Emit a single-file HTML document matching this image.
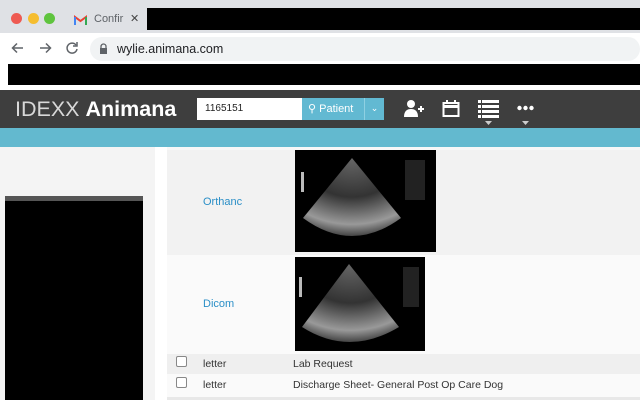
<!DOCTYPE html>
<html><head><style>
*{margin:0;padding:0;box-sizing:border-box}
body{width:640px;height:400px;overflow:hidden;background:#fff;font-family:"Liberation Sans",Arial,sans-serif;position:relative}
.a{position:absolute}
</style></head><body>
<div class="a" style="left:0;top:0;width:640px;height:33px;background:#dfe1e5"></div>
<div class="a" style="left:11px;top:13px;width:11px;height:11px;border-radius:50%;background:#ee5a52"></div>
<div class="a" style="left:28px;top:13px;width:11px;height:11px;border-radius:50%;background:#f5bd2f"></div>
<div class="a" style="left:44px;top:13px;width:11px;height:11px;border-radius:50%;background:#5fc43e"></div>
<svg class="a" style="left:74px;top:15px" width="13" height="10" viewBox="0 0 13 10"><path d="M1 10V2l5.5 4L12 2v8" fill="none" stroke="#ea4335" stroke-width="2"/><path d="M1 10V2" stroke="#4285f4" stroke-width="2"/><path d="M12 10V2" stroke="#34a853" stroke-width="2"/></svg>
<div class="a" style="left:94px;top:13px;font-size:11px;color:#5f6368">Confir</div>
<div class="a" style="left:130px;top:12px;font-size:11px;color:#444">✕</div>
<div class="a" style="left:147px;top:8px;width:493px;height:22px;background:#000"></div>
<div class="a" style="left:0;top:33px;width:640px;height:31px;background:#fff"></div>
<svg class="a" style="left:10px;top:40px" width="70" height="16" viewBox="0 0 70 16" fill="none" stroke="#5f6368" stroke-width="1.5"><path d="M13 8H3M7 3.5L2.5 8 7 12.5"/><path d="M30 8h10M36 3.5L40.5 8 36 12.5"/><path d="M66 5a5 5 0 1 0 1 4"/><path d="M67 2v4h-4"/></svg>
<div class="a" style="left:90px;top:37px;width:550px;height:24px;border-radius:12px;background:#f1f3f4"></div>
<svg class="a" style="left:99px;top:43px" width="9" height="11" viewBox="0 0 9 11"><path d="M2 5V3.5a2.5 2.5 0 0 1 5 0V5" fill="none" stroke="#5f6368" stroke-width="1.3"/><rect x="1" y="5" width="7" height="6" fill="#5f6368"/></svg>
<div class="a" style="left:117px;top:42px;font-size:12.5px;color:#202124">wylie.animana.com</div>
<div class="a" style="left:8px;top:64px;width:632px;height:21px;background:#000"></div>
<div class="a" style="left:0;top:90px;width:640px;height:38px;background:#3e3e3e"></div>
<div class="a" style="left:15px;top:96px;font-size:21.5px;color:#fff;line-height:26px;white-space:nowrap"><span style="color:#d8d8d8">IDEXX</span> <b>Animana</b></div>
<div class="a" style="left:197px;top:98px;width:105px;height:22px;background:#fff;font-size:10px;padding:5px 0 0 8px;color:#222">1165151</div>
<div class="a" style="left:302px;top:98px;width:62px;height:22px;background:#62b9d2;color:#fff;font-size:11px;padding:4px 0 0 6px">⚲ Patient</div>
<div class="a" style="left:364px;top:98px;width:20px;height:22px;background:#62b9d2;border-left:1px solid #8fd0e2;color:#fff;font-size:9px;text-align:center;padding-top:5px">⌄</div>
<svg class="a" style="left:403px;top:99px" width="22" height="20" viewBox="0 0 22 20" fill="#fff"><circle cx="8" cy="5" r="4"/><path d="M1 18c0-6 3-8 7-8s7 2 7 8z"/><path d="M15 9h6v2h-6zM17 7h2v6h-2z"/></svg>
<svg class="a" style="left:442px;top:100px" width="18" height="18" viewBox="0 0 18 18" fill="none" stroke="#fff" stroke-width="2"><rect x="1.5" y="3" width="15" height="13"/><path d="M1.5 6.5h15" stroke-width="3"/><path d="M5 0v4M13 0v4"/></svg>
<svg class="a" style="left:478px;top:100px" width="21" height="27" viewBox="0 0 21 27" fill="#fff"><rect x="0" y="0" width="3" height="3"/><rect x="4" y="0" width="17" height="3"/><rect x="0" y="5" width="3" height="3"/><rect x="4" y="5" width="17" height="3"/><rect x="0" y="10" width="3" height="3"/><rect x="4" y="10" width="17" height="3"/><rect x="0" y="15" width="3" height="3"/><rect x="4" y="15" width="17" height="3"/><path d="M7 21h7l-3.5 4z" fill="#ccc"/></svg>
<svg class="a" style="left:517px;top:105px" width="17" height="22" viewBox="0 0 17 22" fill="#fff"><circle cx="2.5" cy="3" r="2.2"/><circle cx="8.5" cy="3" r="2.2"/><circle cx="14.5" cy="3" r="2.2"/><path d="M5 16h7l-3.5 4z" fill="#ccc"/></svg>
<div class="a" style="left:0;top:128px;width:640px;height:19px;background:#63b9cf"></div>
<div class="a" style="left:0;top:147px;width:155px;height:253px;background:#f4f4f4"></div>
<div class="a" style="left:5px;top:196px;width:138px;height:204px;background:#000"></div>
<div class="a" style="left:5px;top:196px;width:138px;height:5px;background:#555"></div>
<div class="a" style="left:167px;top:147px;width:473px;height:253px;background:#f7f7f7"></div>
<div class="a" style="left:167px;top:150px;width:473px;height:105px;background:#f2f2f2"></div>
<div class="a" style="left:167px;top:255px;width:473px;height:99px;background:#fafafa"></div>
<div class="a" style="left:167px;top:354px;width:473px;height:20px;background:#efefef"></div>
<div class="a" style="left:167px;top:374px;width:473px;height:23px;background:#fafafa"></div>
<div class="a" style="left:167px;top:397px;width:473px;height:3px;background:#e8e8e8"></div>
<div class="a" style="left:203px;top:196px;font-size:11px;color:#2b8fc7">Orthanc</div>
<div class="a" style="left:203px;top:298px;font-size:11px;color:#2b8fc7">Dicom</div>
<svg class="a" style="left:295px;top:150px" width="141" height="102" viewBox="0 0 141 102"><rect width="141" height="102" fill="#000"/><defs><radialGradient id="g" cx="0.5" cy="0" r="1"><stop offset="0" stop-color="#666"/><stop offset="0.5" stop-color="#333"/><stop offset="0.85" stop-color="#999"/><stop offset="1" stop-color="#444"/></radialGradient></defs><path d="M57 8L8 68Q57 104 106 68Z" fill="url(#g)"/><rect x="6" y="22" width="3" height="20" fill="#bbb"/><rect x="110" y="10" width="20" height="40" fill="#222"/></svg>
<svg class="a" style="left:295px;top:257px" width="130" height="94" viewBox="0 0 130 94"><rect width="130" height="94" fill="#000"/><path d="M54 7L7 70Q54 100 104 70Z" fill="url(#g)"/><rect x="4" y="20" width="3" height="20" fill="#bbb"/><rect x="108" y="10" width="16" height="40" fill="#222"/></svg>
<div class="a" style="left:176px;top:356px;width:11px;height:11px;border:1px solid #888;border-radius:2px;background:#fff"></div>
<div class="a" style="left:176px;top:377px;width:11px;height:11px;border:1px solid #888;border-radius:2px;background:#fff"></div>
<div class="a" style="left:203px;top:358px;font-size:10.5px;color:#333">letter</div>
<div class="a" style="left:203px;top:379px;font-size:10.5px;color:#333">letter</div>
<div class="a" style="left:293px;top:358px;font-size:10.5px;color:#333">Lab Request</div>
<div class="a" style="left:293px;top:379px;font-size:10.5px;color:#333">Discharge Sheet- General Post Op Care Dog</div>
</body></html>
